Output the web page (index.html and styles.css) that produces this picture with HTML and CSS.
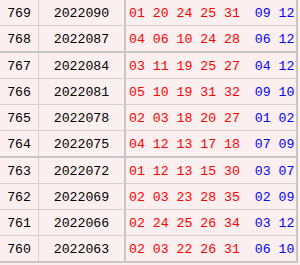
FILE: index.html
```html
<!DOCTYPE html>
<html>
<head>
<meta charset="utf-8">
<link rel="stylesheet" href="styles.css">
</head>
<body>
<table class="draws">
<tr><td class="no">769</td><td class="issue">2022090</td><td class="nums"><span class="red">01 20 24 25 31</span><span class="blue">09 12</span></td></tr>
<tr class="sep"><td class="no">768</td><td class="issue">2022087</td><td class="nums"><span class="red">04 06 10 24 28</span><span class="blue">06 12</span></td></tr>
<tr><td class="no">767</td><td class="issue">2022084</td><td class="nums"><span class="red">03 11 19 25 27</span><span class="blue">04 12</span></td></tr>
<tr><td class="no">766</td><td class="issue">2022081</td><td class="nums"><span class="red">05 10 19 31 32</span><span class="blue">09 10</span></td></tr>
<tr><td class="no">765</td><td class="issue">2022078</td><td class="nums"><span class="red">02 03 18 20 27</span><span class="blue">01 02</span></td></tr>
<tr class="sep"><td class="no">764</td><td class="issue">2022075</td><td class="nums"><span class="red">04 12 13 17 18</span><span class="blue">07 09</span></td></tr>
<tr><td class="no">763</td><td class="issue">2022072</td><td class="nums"><span class="red">01 12 13 15 30</span><span class="blue">03 07</span></td></tr>
<tr><td class="no">762</td><td class="issue">2022069</td><td class="nums"><span class="red">02 03 23 28 35</span><span class="blue">02 09</span></td></tr>
<tr><td class="no">761</td><td class="issue">2022066</td><td class="nums"><span class="red">02 24 25 26 34</span><span class="blue">03 12</span></td></tr>
<tr class="sep"><td class="no">760</td><td class="issue">2022063</td><td class="nums"><span class="red">02 03 22 26 31</span><span class="blue">06 10</span></td></tr>
</table>
</body>
</html>
```
FILE: styles.css
```css
html, body {
  margin: 0;
  padding: 0;
  background: #fcefef;
}
.draws {
  border-collapse: separate;
  border-spacing: 0;
  table-layout: fixed;
  width: 298px;
  font-family: "Liberation Mono", monospace;
  font-size: 13.2px;
  background: #fcefef;
}
.draws td {
  height: 22px;
  line-height: 22px;
  padding: 3px 0 0 0;
  border-bottom: 1px solid #d4d0d0;
  border-right: 1px solid #d4d0d0;
  white-space: pre;
  color: #000;
}
.draws tr.sep td {
  border-bottom: 2px solid #c8c6c6;
}
.draws td.no {
  width: 38px;
  text-align: center;
}
.draws td.issue {
  width: 85px;
  text-align: center;
  border-right: 2px solid #c8c6c6;
}
.draws td.nums {
  width: 167px;
  padding-left: 3px;
  border-right: 2px solid #c8c6c6;
}
.red { color: #ff0000; }
.blue { color: #0000ff; margin-left: 15px; }
```
